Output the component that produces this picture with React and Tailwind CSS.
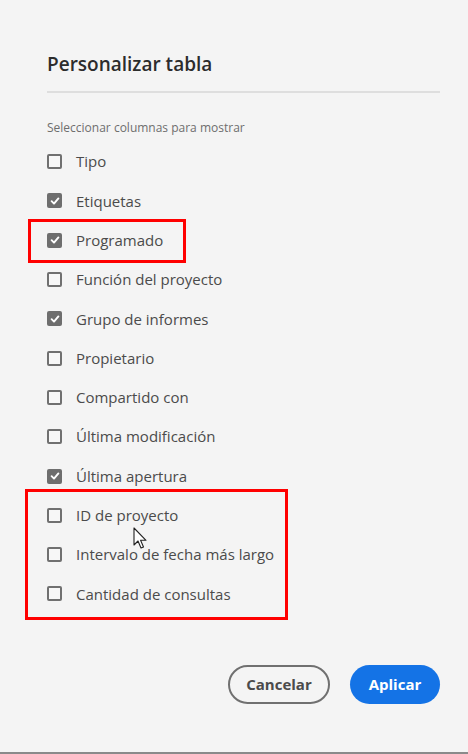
import React from "react";

const items = [
  ["Tipo", false],
  ["Etiquetas", true],
  ["Programado", true],
  ["Función del proyecto", false],
  ["Grupo de informes", true],
  ["Propietario", false],
  ["Compartido con", false],
  ["Última modificación", false],
  ["Última apertura", true],
  ["ID de proyecto", false],
  ["Intervalo de fecha más largo", false],
  ["Cantidad de consultas", false],
];

function Box({ checked }) {
  if (checked) {
    return (
      <span className="flex h-[15px] w-[15px] items-center justify-center rounded-[2px] bg-[#6e6e6e]">
        <svg width="10" height="10" viewBox="0 0 10 10">
          <path d="M1.6 5.2 L4 7.6 L8.4 2.4" fill="none" stroke="#fff" strokeWidth="1.9" strokeLinecap="round" strokeLinejoin="round" />
        </svg>
      </span>
    );
  }
  return <span className="h-[15px] w-[15px] rounded-[2px] border-2 border-[#707070] bg-[#f7f7f7]" />;
}

export default function App() {
  return (
    <div className="relative h-[754px] w-[468px] overflow-hidden bg-[#f4f4f4] font-['Open_Sans',sans-serif]">
      <div className="pl-[47px] pt-[50px]">
        <h1 className="text-[19px] font-semibold leading-[28px] text-[#2c2c2c]">Personalizar tabla</h1>
        <div className="mt-[13px] h-[2px] w-[393px] bg-[#dedede]" />
        <p className="mt-[26px] text-[12px] leading-[18px] text-[#6e6e6e]">Seleccionar columnas para mostrar</p>
        <div className="mt-[5px] flex flex-col">
          {items.map(([label, checked]) => (
            <div key={label} className="flex h-[39.3px] items-center gap-[14px]">
              <Box checked={checked} />
              <span className="text-[15px] text-[#4b4b4b]">{label}</span>
            </div>
          ))}
        </div>
        <div className="mt-[51px] flex w-[393px] justify-end gap-[20px]">
          <button className="flex h-[39px] w-[102px] items-center justify-center rounded-full border-2 border-[#707070] text-[15px] font-bold text-[#4b4b4b]">
            Cancelar
          </button>
          <button className="flex h-[39px] w-[90px] items-center justify-center rounded-full bg-[#1473e6] text-[15px] font-bold text-white">
            Aplicar
          </button>
        </div>
      </div>

      {/* annotation boxes */}
      <div className="pointer-events-none absolute left-[28px] top-[219px] h-[44px] w-[158px] border-[3px] border-[#ff0000]" />
      <div className="pointer-events-none absolute left-[25px] top-[489px] h-[131px] w-[263px] border-[3px] border-[#ff0000]" />

      {/* cursor */}
      <svg className="absolute left-[133px] top-[527px]" width="16" height="24" viewBox="0 0 16 24">
        <path d="M1 1 L1 18 L5 14 L8 21 L10.5 20 L7.6 13.3 L13 13.3 Z" fill="#fff" stroke="#222" strokeWidth="1.1" strokeLinejoin="round" />
      </svg>

      <div className="absolute bottom-0 left-0 h-[2px] w-full bg-[#8a8a8a]" />
    </div>
  );
}
